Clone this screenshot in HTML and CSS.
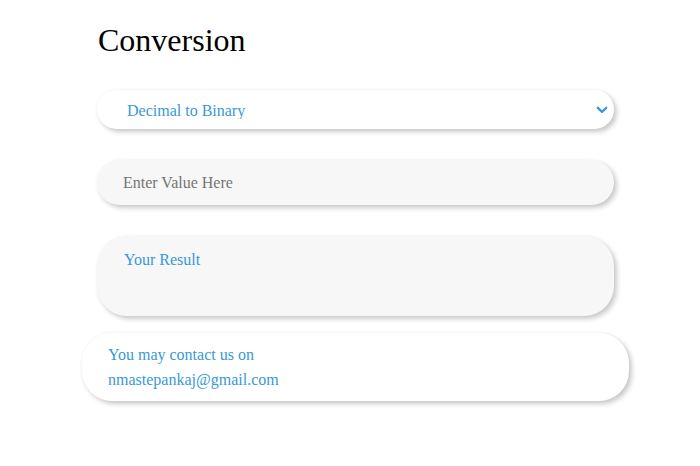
FILE: index.html
```html
<!DOCTYPE html>
<html lang="en">
<head>
<meta charset="utf-8">
<title>Conversion</title>
<link rel="stylesheet" href="styles.css">
</head>
<body>
<main class="page">
  <h1 class="title">Conversion</h1>
  <div class="select-wrap">
    <select class="select">
      <option>Decimal to Binary</option>
      <option>Binary to Decimal</option>
    </select>
    <svg class="chevron" width="12" height="8" viewBox="0 0 12 8" aria-hidden="true">
      <path d="M1.8 1.8 L6 5.8 L10.2 1.8" fill="none" stroke="#3a98d8" stroke-width="2.3" stroke-linecap="round" stroke-linejoin="round"/>
    </svg>
  </div>
  <input class="value" type="text" placeholder="Enter Value Here">
  <div class="result">Your Result</div>
  <div class="contact">
    <p class="contact-line">You may contact us on</p>
    <p class="contact-line">nmastepankaj@gmail.com</p>
  </div>
</main>
</body>
</html>
```
FILE: styles.css
```css
html, body {
  margin: 0;
  padding: 0;
  background: #ffffff;
}

body {
  font-family: "Liberation Serif", "Times New Roman", serif;
  font-size: 16px;
  color: #000;
}

.page {
  width: 517px;
  padding: 22px 0 40px 97px;
  display: flex;
  flex-direction: column;
}

.title {
  margin: 0 0 31px 1px;
  font-size: 32px;
  line-height: 37px;
  font-weight: normal;
}

.select-wrap {
  position: relative;
  height: 39px;
  margin-bottom: 31px;
}

.select {
  appearance: none;
  -webkit-appearance: none;
  box-sizing: border-box;
  width: 100%;
  height: 39px;
  border: none;
  outline: none;
  border-radius: 20px;
  background: #ffffff;
  padding: 2px 0 0 30px;
  font-family: inherit;
  font-size: 16px;
  color: #3a98d8;
  box-shadow: 0 0 4px rgba(0, 0, 0, 0.05), 3px 3px 5px rgba(0, 0, 0, 0.2);
}

.chevron {
  position: absolute;
  right: 6px;
  top: 16px;
}

.value {
  box-sizing: border-box;
  width: 100%;
  height: 45px;
  margin: 0 0 31px 0;
  border: none;
  outline: none;
  border-radius: 23px;
  background: #f7f7f7;
  padding: 0 0 0 26px;
  font-family: inherit;
  font-size: 16px;
  color: #333;
  box-shadow: 0 0 4px rgba(0, 0, 0, 0.04), 3px 3px 5px rgba(0, 0, 0, 0.2);
}

.value::placeholder {
  color: #757575;
}

.result {
  box-sizing: border-box;
  height: 80px;
  margin-bottom: 17px;
  border-radius: 30px;
  background: #f7f7f7;
  padding: 15px 0 0 27px;
  line-height: 18px;
  color: #3a98d8;
  box-shadow: 0 0 4px rgba(0, 0, 0, 0.04), 3px 3px 5px rgba(0, 0, 0, 0.2);
}

.contact {
  box-sizing: border-box;
  width: 547px;
  height: 68px;
  margin-left: -15px;
  border-radius: 30px;
  background: #ffffff;
  padding: 9px 0 0 26px;
  color: #3a98d8;
  box-shadow: 0 0 4px rgba(0, 0, 0, 0.05), 3px 3px 5px rgba(0, 0, 0, 0.2);
}

.contact-line {
  margin: 0;
  line-height: 25px;
}
```
